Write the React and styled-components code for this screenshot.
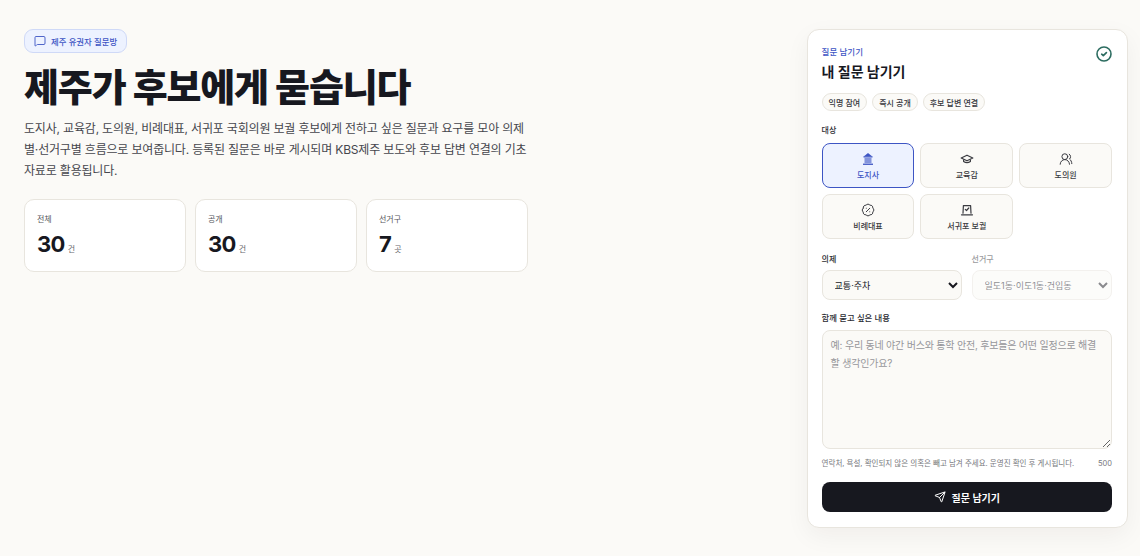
import React from "react";
import styled, { createGlobalStyle } from "styled-components";
import { MessageSquare, UsersRound, BadgePercent, Send } from "lucide-react";

const FONT = `Inter, "Noto Sans CJK KR", "Noto Sans", sans-serif`;

const GlobalStyle = createGlobalStyle`
  * { box-sizing: border-box; }
  html, body { margin: 0; padding: 0; }
  body {
    background: #fbfaf7;
    font-family: ${FONT};
    color: #17181f;
  }
`;

function BankIcon() {
  return (
    <svg width="14" height="14" viewBox="0 0 14 14">
      <path d="M7 1 L11 4.2 H3 Z" fill="currentColor" />
      <rect x="2.5" y="4.2" width="9" height="1.3" fill="currentColor" />
      <rect x="3.5" y="6" width="7" height="5.2" fill="currentColor" opacity="0.6" />
      <rect x="2" y="11.6" width="10" height="1.3" fill="currentColor" />
    </svg>
  );
}

function CapIcon() {
  return (
    <svg width="14" height="14" viewBox="0 0 14 14" fill="none" stroke="currentColor" strokeWidth="1.2" strokeLinejoin="round">
      <path d="M1.2 6 L7 3.2 L12.8 6 L7 8.8 Z" />
      <path d="M3.6 7.6 V9.4 Q7 11.8 10.4 9.4 V7.6" />
    </svg>
  );
}

function BoothIcon() {
  return (
    <svg width="14" height="14" viewBox="0 0 14 14" fill="none" stroke="currentColor" strokeWidth="1.2" strokeLinecap="round" strokeLinejoin="round">
      <path d="M3 10.2 L3.4 2.6 H10.6 L11 10.2" />
      <path d="M5.3 6.3 L6.5 7.5 L8.8 5" />
      <path d="M1.5 11.8 H12.5" />
    </svg>
  );
}

function CheckBadge() {
  return (
    <svg width="16" height="16" viewBox="0 0 16 16" fill="none" stroke="#2c6c60" strokeLinecap="round" strokeLinejoin="round">
      <circle cx="8" cy="8" r="7" strokeWidth="1.6" />
      <path d="M5.7 8.2 L7.3 9.6 L10.4 6.6" strokeWidth="1.7" />
    </svg>
  );
}

const stats = [
  { label: "전체", value: "30", unit: "건" },
  { label: "공개", value: "30", unit: "건" },
  { label: "선거구", value: "7", unit: "곳" },
];

const targets = [
  { label: "도지사", icon: <BankIcon />, active: true },
  { label: "교육감", icon: <CapIcon /> },
  { label: "도의원", icon: <UsersRound size={14} strokeWidth={1.7} /> },
  { label: "비례대표", icon: <BadgePercent size={14} strokeWidth={1.7} /> },
  { label: "서귀포 보궐", icon: <BoothIcon /> },
];

export default function App() {
  return (
    <Page>
      <GlobalStyle />
      <Intro>
        <Badge>
          <MessageSquare size={12} strokeWidth={1.8} />
          제주 유권자 질문방
        </Badge>
        <Title>제주가 후보에게 묻습니다</Title>
        <Lead>
          도지사, 교육감, 도의원, 비례대표, 서귀포 국회의원 보궐 후보에게 전하고 싶은 질문과 요구를 모아 의제별·선거구별 흐름으로
          보여줍니다. 등록된 질문은 바로 게시되며 KBS제주 보도와 후보 답변 연결의 기초 자료로 활용됩니다.
        </Lead>
        <Stats>
          {stats.map((s) => (
            <StatCard key={s.label}>
              <StatLabel>{s.label}</StatLabel>
              <StatValue>
                {s.value}
                <StatUnit>{s.unit}</StatUnit>
              </StatValue>
            </StatCard>
          ))}
        </Stats>
      </Intro>

      <FormCard>
        <FormHead>
          <div>
            <Eyebrow>질문 남기기</Eyebrow>
            <FormTitle>내 질문 남기기</FormTitle>
          </div>
          <CheckBadge />
        </FormHead>

        <Chips>
          <Chip>익명 참여</Chip>
          <Chip>즉시 공개</Chip>
          <Chip>후보 답변 연결</Chip>
        </Chips>

        <FieldLabel>대상</FieldLabel>
        <TargetGrid>
          {targets.map(({ label, icon, active }) => (
            <TargetButton key={label} $active={active}>
              {icon}
              {label}
            </TargetButton>
          ))}
        </TargetGrid>

        <SelectRow>
          <div>
            <SelectLabel>의제</SelectLabel>
            <Select defaultValue="교통·주차">
              <option>교통·주차</option>
            </Select>
          </div>
          <div>
            <SelectLabel $muted>선거구</SelectLabel>
            <Select disabled defaultValue="일도1동·이도1동·건입동">
              <option>일도1동·이도1동·건입동</option>
            </Select>
          </div>
        </SelectRow>

        <ContentLabel>함께 묻고 싶은 내용</ContentLabel>
        <TextArea placeholder="예: 우리 동네 야간 버스와 통학 안전, 후보들은 어떤 일정으로 해결할 생각인가요?" />

        <HelpRow>
          <span>연락처, 욕설, 확인되지 않은 의혹은 빼고 남겨 주세요. 운영진 확인 후 게시됩니다.</span>
          <span>500</span>
        </HelpRow>

        <SubmitButton>
          <Send size={12} strokeWidth={2} />
          질문 남기기
        </SubmitButton>
      </FormCard>
    </Page>
  );
}

const Page = styled.div`
  width: 1140px;
  height: 556px;
  padding: 29px 12px 0 24px;
  display: flex;
  justify-content: space-between;
  align-items: flex-start;
  overflow: hidden;
`;

const Intro = styled.section`
  width: 504px;
`;

const Badge = styled.div`
  display: inline-flex;
  align-items: center;
  gap: 5px;
  height: 24px;
  padding: 0 9px;
  border: 1px solid #cfd9f7;
  border-radius: 9px;
  background: #edf2ff;
  color: #3d55c4;
  font-size: 8.4px;
  font-weight: 500;
`;

const Title = styled.h1`
  margin: 11px 0 0;
  font-size: 38px;
  line-height: 46px;
  font-weight: 800;
  letter-spacing: -0.03em;
  color: #17181f;
`;

const Lead = styled.p`
  margin: 8px 0 0;
  font-size: 12px;
  line-height: 21px;
  letter-spacing: -0.015em;
  color: #45464d;
`;

const Stats = styled.div`
  margin-top: 18px;
  display: grid;
  grid-template-columns: repeat(3, 1fr);
  gap: 9px;
`;

const StatCard = styled.div`
  height: 73px;
  padding: 13px 12px;
  background: #fff;
  border: 1px solid #e8e5de;
  border-radius: 10px;
`;

const StatLabel = styled.div`
  font-size: 8px;
  line-height: 12px;
  color: #55565c;
`;

const StatValue = styled.div`
  margin-top: 6px;
  display: flex;
  align-items: baseline;
  font-size: 22px;
  line-height: 26px;
  font-weight: 700;
  letter-spacing: -0.03em;
  color: #17181f;
`;

const StatUnit = styled.span`
  margin-left: 3px;
  font-size: 8px;
  font-weight: 400;
  color: #66676d;
`;

const FormCard = styled.aside`
  width: 321px;
  height: 499px;
  padding: 16px 15px 15px 13.6px;
  background: #fff;
  border: 1px solid #e8e5de;
  border-radius: 12px;
  box-shadow: 0 8px 24px rgba(30, 28, 20, 0.05);
`;

const FormHead = styled.div`
  display: flex;
  justify-content: space-between;
  align-items: flex-start;
`;

const Eyebrow = styled.div`
  font-size: 8.5px;
  line-height: 12px;
  font-weight: 500;
  color: #3d55c4;
`;

const FormTitle = styled.h2`
  margin: 4px 0 0;
  font-size: 14px;
  line-height: 20px;
  font-weight: 700;
`;

const Chips = styled.div`
  margin-top: 11px;
  display: flex;
  gap: 5px;
`;

const Chip = styled.span`
  height: 18px;
  padding: 0 6px;
  display: inline-flex;
  align-items: center;
  font-size: 8px;
  font-weight: 500;
  color: #35363c;
  background: #fbfaf7;
  border: 1px solid #e8e5de;
  border-radius: 9px;
`;

const FieldLabel = styled.div`
  margin: 13px 0 7px;
  font-size: 8px;
  line-height: 12px;
  font-weight: 500;
  color: #2c2d33;
`;

const SelectLabel = styled(FieldLabel)`
  margin: 0 0 5px;
  color: ${(p) => (p.$muted ? "#9a9a9e" : "#2c2d33")};
`;

const ContentLabel = styled(FieldLabel)`
  margin: 12px 0 6px;
  font-size: 8.4px;
`;

const TargetGrid = styled.div`
  display: grid;
  grid-template-columns: repeat(3, 1fr);
  gap: 6px;
`;

const TargetButton = styled.button`
  height: 45px;
  padding: 0;
  display: flex;
  flex-direction: column;
  align-items: center;
  justify-content: center;
  gap: 3px;
  font-family: ${FONT};
  font-size: 8px;
  font-weight: 500;
  color: ${(p) => (p.$active ? "#3d55c4" : "#3a3b41")};
  background: ${(p) => (p.$active ? "#edf2ff" : "#fbfaf7")};
  border: 1px solid ${(p) => (p.$active ? "#3d55c4" : "#e8e5de")};
  border-radius: 8px;
`;

const SelectRow = styled.div`
  margin-top: 14px;
  display: grid;
  grid-template-columns: 1fr 1fr;
  gap: 9.5px;
`;

const Select = styled.select`
  width: 100%;
  height: 30px;
  padding: 0 8px;
  font-family: ${FONT};
  font-size: 9px;
  color: #17181f;
  background: #fbfaf7;
  border: 1px solid #e8e5de;
  border-radius: 8px;

  &:disabled {
    opacity: 0.5;
  }
`;

const TextArea = styled.textarea`
  display: block;
  width: 100%;
  height: 119px;
  padding: 5px 8px;
  font-family: ${FONT};
  font-size: 10px;
  line-height: 18px;
  letter-spacing: -0.02em;
  color: #17181f;
  background: #fbfaf7;
  border: 1px solid #e8e5de;
  border-radius: 8px;

  &::placeholder {
    color: #96969a;
  }
`;

const HelpRow = styled.div`
  margin-top: 9px;
  display: flex;
  justify-content: space-between;
  font-size: 7.5px;
  line-height: 11px;
  color: #77787d;
`;

const SubmitButton = styled.button`
  margin-top: 13px;
  width: 100%;
  height: 30px;
  display: flex;
  align-items: center;
  justify-content: center;
  gap: 6px;
  font-family: ${FONT};
  font-size: 10px;
  font-weight: 700;
  color: #fff;
  background: #17181f;
  border: 0;
  border-radius: 8px;
`;
